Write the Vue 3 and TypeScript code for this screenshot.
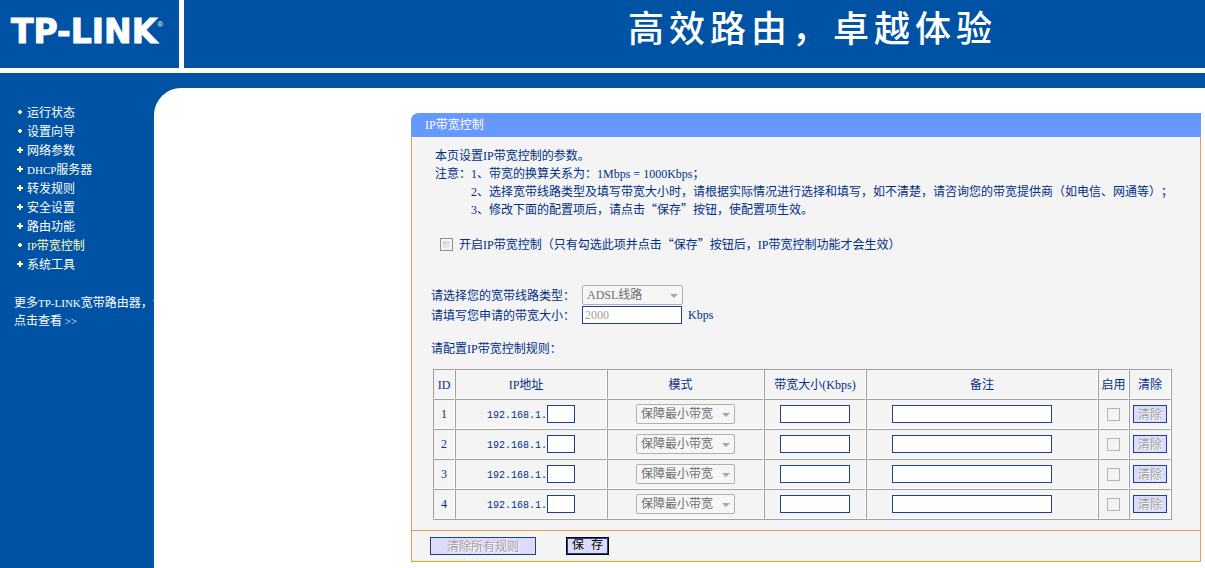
<script setup lang="ts">
import { h, ref } from 'vue'

interface MenuItem {
  label: string
  expandable: boolean
  current?: boolean
}

interface Rule {
  id: number
  host: string
  rate: string
  note: string
  enabled: boolean
}

// Sets runs of Latin characters in the serif face used beside the Chinese text.
const Mixed = (props: { text: string }) =>
  props.text
    .split(/([\x21-\x7e]+(?: [\x21-\x7e]+)*)/)
    .filter((part) => part !== '')
    .map((part) => (/^[\x21-\x7e]/.test(part) ? h('span', { class: 'latin' }, part) : part))
Mixed.props = ['text']

const menu: MenuItem[] = [
  { label: '运行状态', expandable: false },
  { label: '设置向导', expandable: false },
  { label: '网络参数', expandable: true },
  { label: 'DHCP服务器', expandable: true },
  { label: '转发规则', expandable: true },
  { label: '安全设置', expandable: true },
  { label: '路由功能', expandable: true },
  { label: 'IP带宽控制', expandable: false, current: true },
  { label: '系统工具', expandable: true },
]

const notes: string[] = [
  '1、带宽的换算关系为：1Mbps = 1000Kbps；',
  '2、选择宽带线路类型及填写带宽大小时，请根据实际情况进行选择和填写，如不清楚，请咨询您的带宽提供商（如电信、网通等）；',
  '3、修改下面的配置项后，请点击“保存”按钮，使配置项生效。',
]

const active = ref(false)
const bandwidth = ref('2000')
const rules = ref<Rule[]>(
  [1, 2, 3, 4].map((id) => ({ id, host: '', rate: '', note: '', enabled: false })),
)
</script>

<template>
  <div class="page">
    <header class="top">
      <div class="brand">TP-LINK<span class="reg">®</span></div>
      <h1 class="slogan">高效路由，卓越体验</h1>
    </header>

    <div class="body">
      <nav class="side">
        <ul class="menu">
          <li v-for="item in menu" :key="item.label">
            <a href="#" :class="{ current: item.current }">
              <svg class="mark" viewBox="0 0 6 6" width="6" height="6" aria-hidden="true">
                <path v-if="item.expandable" d="M2 0h2v2h2v2H4v2H2V4H0V2h2z" />
                <path v-else d="M2 1h2v1h1v2H4v1H2V4H1V2h1z" />
              </svg>
              <span><Mixed :text="item.label" /></span>
            </a>
          </li>
        </ul>
        <p class="more">
          <Mixed text="更多TP-LINK宽带路由器，请" /><br />
          <a href="#">点击查看 <Mixed text=">>" /></a>
        </p>
      </nav>

      <main class="main">
        <form class="panel" @submit.prevent>
          <h2 class="title"><Mixed text="IP带宽控制" /></h2>

          <div class="content">
            <div class="intro">
              <p><Mixed text="本页设置IP带宽控制的参数。" /></p>
              <div class="notice">
                <span>注意：</span>
                <div>
                  <p v-for="note in notes" :key="note"><Mixed :text="note" /></p>
                </div>
              </div>
            </div>

            <label class="switch">
              <input v-model="active" type="checkbox" class="tick" />
              <span><Mixed text="开启IP带宽控制（只有勾选此项并点击“保存”按钮后，IP带宽控制功能才会生效）" /></span>
            </label>

            <div class="field">
              <label for="line">请选择您的宽带线路类型：</label>
              <span class="drop line-drop">
                <select id="line" disabled>
                  <option>ADSL线路</option>
                </select>
              </span>
            </div>
            <div class="field">
              <label for="size">请填写您申请的带宽大小：</label>
              <input id="size" v-model="bandwidth" type="text" class="box size-box" disabled />
              <span class="latin unit">Kbps</span>
            </div>

            <p class="caption"><Mixed text="请配置IP带宽控制规则：" /></p>

            <table class="rules">
              <colgroup>
                <col class="c-id" />
                <col class="c-ip" />
                <col class="c-mode" />
                <col class="c-rate" />
                <col />
                <col class="c-on" />
                <col class="c-clear" />
              </colgroup>
              <thead>
                <tr>
                  <th><Mixed text="ID" /></th>
                  <th class="lead"><Mixed text="IP地址" /></th>
                  <th class="lead">模式</th>
                  <th><Mixed text="带宽大小(Kbps)" /></th>
                  <th>备注</th>
                  <th>启用</th>
                  <th>清除</th>
                </tr>
              </thead>
              <tbody>
                <tr v-for="rule in rules" :key="rule.id">
                  <td class="latin">{{ rule.id }}</td>
                  <td>
                    <label class="ip">
                      <span class="prefix">192.168.1.</span>
                      <input v-model="rule.host" type="text" class="box host-box" />
                    </label>
                  </td>
                  <td>
                    <span class="drop mode-drop">
                      <select disabled aria-label="模式">
                        <option>保障最小带宽</option>
                      </select>
                    </span>
                  </td>
                  <td><input v-model="rule.rate" type="text" class="box rate-box" aria-label="带宽大小" /></td>
                  <td class="note"><input v-model="rule.note" type="text" class="box note-box" aria-label="备注" /></td>
                  <td><input v-model="rule.enabled" type="checkbox" class="tick" disabled aria-label="启用" /></td>
                  <td><button type="button" class="btn" disabled>清除</button></td>
                </tr>
              </tbody>
            </table>
          </div>

          <div class="actions">
            <button type="button" class="btn wide" disabled>清除所有规则</button>
            <button type="submit" class="btn save">保 存</button>
          </div>
        </form>
      </main>
    </div>
  </div>
</template>

<style>
html,
body,
#app {
  height: 100%;
}

body {
  margin: 0;
  background: #fff;
}

.latin {
  font-family: 'Liberation Serif', serif;
  line-height: 12px;
}
</style>

<style scoped>
.page {
  display: flex;
  flex-direction: column;
  min-height: 100%;
  font-family: 'Noto Sans CJK SC', sans-serif;
  font-size: 12px;
  line-height: 18px;
  color: #002f86;
  text-spacing-trim: space-all;
}

.page * {
  box-sizing: border-box;
}

p,
ul,
h1,
h2 {
  margin: 0;
  padding: 0;
}

.top {
  display: flex;
  height: 73px;
  border-bottom: 5px solid #fff;
  background: #0053a4;
  color: #fff;
}

.brand {
  display: flex;
  align-items: center;
  width: 184px;
  padding: 0 0 4px 11px;
  border-right: 5px solid #fff;
  font: bold 33px/40px 'DejaVu Sans', sans-serif;
  -webkit-text-stroke: 1px #fff;
}

.reg {
  align-self: flex-start;
  margin-top: 21px;
  font: 8px/8px 'Liberation Sans', sans-serif;
  -webkit-text-stroke: 0;
}

.slogan {
  flex: 1;
  padding-left: 444px;
  font-size: 36px;
  font-weight: 500;
  line-height: 52px;
  letter-spacing: 5px;
  white-space: nowrap;
}

.body {
  display: flex;
  flex: 1;
  border-top: 15px solid #0053a4;
  background: #0053a4;
}

.side {
  flex: none;
  width: 154px;
  padding: 14px 0 0 14px;
  overflow: hidden;
  white-space: nowrap;
  color: #fff;
}

.side :deep(.latin) {
  font-size: 11px;
}

.side a {
  color: #fff;
  text-decoration: none;
}

.menu {
  list-style: none;
}

.menu a {
  display: flex;
  align-items: center;
  gap: 4px;
  height: 19px;
  padding-left: 3px;
}

.menu a.current {
  color: #ffffbe;
}

.mark {
  fill: #ffffa8;
}

.more {
  margin-top: 20px;
}

.main {
  flex: 1;
  min-width: 0;
  padding: 25px 4px 6px 257px;
  border-top-left-radius: 27px;
  background: #fff;
}

.panel {
  border: 1px solid #e3a055;
  border-top: 0;
  border-top-left-radius: 8px;
  background: #f4f4f4;
}

.title {
  height: 24px;
  margin: 0 -1px;
  padding-left: 14px;
  border-top-left-radius: 8px;
  background: #69f;
  color: #fff;
  font-size: 12px;
  font-weight: 400;
  line-height: 22px;
}

.content {
  padding: 9px 28px 10px 19px;
}

.intro {
  padding-left: 4px;
  white-space: nowrap;
}

.notice {
  display: flex;
}

.switch {
  display: flex;
  align-items: center;
  gap: 6px;
  height: 20px;
  margin: 16px 0 31px 9px;
}

.tick {
  display: block;
  appearance: none;
  flex: none;
  width: 13px;
  height: 13px;
  margin: 0 auto;
  border: 1px solid #8e8f8f;
  background: linear-gradient(135deg, #c4c8cc, #f8f8f8);
  box-shadow: inset 0 0 0 2px #f4f4f4;
}

.switch .tick {
  margin: 0;
}

.tick:disabled {
  border-color: #b4b4b4;
  background: linear-gradient(135deg, #eee, #fafafa);
}

.field {
  display: flex;
  align-items: center;
  height: 20px;
}

.field label {
  width: 151px;
}

.unit {
  margin-left: 6px;
}

.drop {
  position: relative;
  display: block;
  height: 20px;
  margin: 0 auto;
}

.drop::after {
  content: '';
  position: absolute;
  top: 9px;
  right: 5px;
  border: 4px solid transparent;
  border-top-color: #a5a5a5;
  border-bottom: 0;
  pointer-events: none;
}

.drop select {
  display: block;
  appearance: none;
  width: 100%;
  height: 20px;
  padding: 0 4px;
  border: 1px solid #b0b0b0;
  border-radius: 2px;
  background: #f6f6f6;
  color: #6d6d6d;
  font: 12px/18px 'Liberation Serif', 'Noto Sans CJK SC', serif;
  opacity: 1;
}

.line-drop {
  width: 101px;
  margin: 0;
}

.mode-drop {
  width: 99px;
}

.box {
  display: block;
  height: 18px;
  margin: 0 auto;
  padding: 0 2px;
  border: 1px solid #1f3f8f;
  background: #fff;
  color: #002f86;
  font: 12px/14px 'Liberation Serif', serif;
}

.box:disabled {
  color: #a0a0a0;
}

.size-box {
  width: 100px;
  margin: 0;
}

.caption {
  margin: 14px 0 12px;
}

.rules {
  width: calc(100% - 2px);
  margin-left: 2px;
  table-layout: fixed;
  border-collapse: separate;
  border-spacing: 0;
  border-right: 1px solid #a0a0a0;
  border-bottom: 1px solid #a0a0a0;
  text-align: center;
}

.c-id {
  width: 22px;
}

.c-ip {
  width: 152px;
}

.c-mode {
  width: 157px;
}

.c-rate {
  width: 102px;
}

.c-on {
  width: 31px;
}

.c-clear {
  width: 42px;
}

.rules th,
.rules td {
  height: 30px;
  padding: 0;
  border: 1px solid;
  border-color: #a0a0a0 #fff #fff #a0a0a0;
  font-weight: 400;
  vertical-align: middle;
  white-space: nowrap;
}

.rules .lead {
  padding-right: 10px;
}

.ip {
  display: flex;
  align-items: center;
  justify-content: center;
}

.prefix {
  width: 60px;
  padding-top: 4px;
  font: 10px/14px 'Liberation Mono', monospace;
}

.ip .box {
  width: 28px;
  margin: 0;
}

.rate-box {
  width: 70px;
}

.rules .note {
  padding-right: 20px;
}

.note-box {
  width: 160px;
}

.btn {
  height: 18px;
  padding: 0 4px;
  border: 1px solid #1f3f8f;
  background: #dcdcfa;
  color: #000;
  font: 12px/14px 'Noto Sans CJK SC', sans-serif;
  white-space: nowrap;
}

.btn:disabled {
  color: #a0a0a0;
  text-shadow: 1px 1px 0 #fff;
}

.rules .btn {
  display: block;
  margin: 0 auto;
}

.wide {
  width: 106px;
}

.save {
  width: 43px;
  border-color: #000;
  box-shadow: inset 0 0 0 1px #1f3f8f;
  font-family: 'Liberation Mono', 'Noto Sans CJK SC', sans-serif;
}

.actions {
  display: flex;
  align-items: center;
  gap: 30px;
  height: 31px;
  padding-left: 18px;
  border-top: 1px solid #e3a055;
  box-shadow: inset 0 -1px 0 #fff0c0;
}
</style>
